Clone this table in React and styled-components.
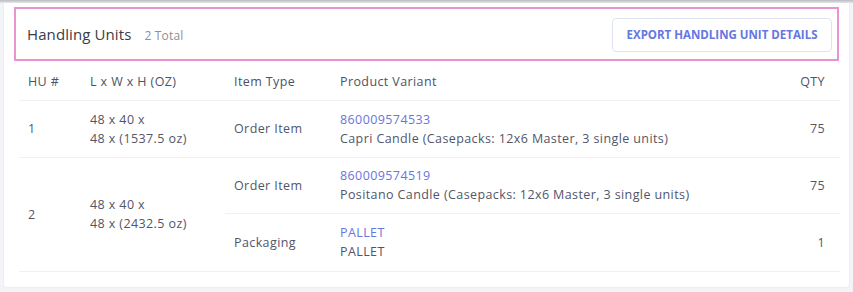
import React from "react";
import styled, { createGlobalStyle } from "styled-components";

const GlobalStyle = createGlobalStyle`
  html, body { margin: 0; padding: 0; }
  body {
    background: #f3f4f7;
    font-family: "Open Sans", "Liberation Sans", sans-serif;
    color: #525669;
  }
`;

const TopStrip = styled.div`
  height: 3px;
  background: linear-gradient(#b9bbc0, #e6e7ea);
`;

const Page = styled.div`
  padding: 0 3px 4px 3px;
`;

const Card = styled.section`
  background: #fff;
  border: 1px solid #eceef2;
  border-top: none;
  border-radius: 0 0 4px 4px;
  padding: 4px 9px 17px 9px;
  height: 285px;
  box-sizing: border-box;
`;

const Header = styled.header`
  display: flex;
  align-items: center;
  justify-content: space-between;
  height: 54px;
  box-sizing: border-box;
  border: 2px solid #eb92d3;
  padding: 0 5px 0 11px;
  margin: 0 1px 0 1px;
`;

const TitleGroup = styled.div`
  display: flex;
  align-items: baseline;
  gap: 13px;
`;

const Title = styled.h2`
  margin: 0;
  font-size: 15px;
  font-weight: 500;
  letter-spacing: 0.1px;
  color: #3a3c47;
`;

const Count = styled.span`
  font-size: 12px;
  letter-spacing: 0.2px;
  color: #8d8f99;
`;

const ExportButton = styled.button`
  height: 34px;
  width: 220px;
  margin-top: 1px;
  border: 1px solid #dfe3f1;
  border-radius: 4px;
  background: #fff;
  color: #6676e3;
  font-family: inherit;
  font-size: 11.5px;
  font-weight: 700;
  text-transform: uppercase;
  cursor: pointer;
`;

const Table = styled.table`
  width: calc(100% - 6px);
  margin-left: 6px;
  border-collapse: collapse;
  font-size: 12.5px;
  letter-spacing: 0.4px;
  line-height: 19px;
`;

const Th = styled.th`
  text-align: ${(p) => p.$align || "left"};
  font-weight: 400;
  color: #4e5265;
  height: 39px;
  padding: 2px ${(p) => (p.$align === "right" ? "15px" : "9px")} 0 9px;
  border-bottom: 1px solid #f0f1f4;
  width: ${(p) => p.$w || "auto"};
  box-sizing: border-box;
`;

const Td = styled.td`
  text-align: ${(p) => p.$align || "left"};
  vertical-align: middle;
  padding: 0 ${(p) => (p.$align === "right" ? "15px" : "9px")} 0 9px;
  height: ${(p) => p.$h || 55}px;
  border-bottom: 1px solid #f0f1f4;
  color: #525669;
`;

const Stack = styled.div`
  display: flex;
  flex-direction: column;
`;

const VariantLink = styled.a`
  color: #6a75da;
  text-decoration: none;
`;

const rows = [
  {
    hu: "1",
    dims: ["48 x 40 x", "48 x (1537.5 oz)"],
    items: [
      {
        type: "Order Item",
        code: "860009574533",
        name: "Capri Candle (Casepacks: 12x6 Master, 3 single units)",
        qty: 75,
        h: 56,
      },
    ],
  },
  {
    hu: "2",
    dims: ["48 x 40 x", "48 x (2432.5 oz)"],
    items: [
      {
        type: "Order Item",
        code: "860009574519",
        name: "Positano Candle (Casepacks: 12x6 Master, 3 single units)",
        qty: 75,
        h: 55,
      },
      { type: "Packaging", code: "PALLET", name: "PALLET", qty: 1, h: 57 },
    ],
  },
];

function ItemCells({ item }) {
  return (
    <>
      <Td $h={item.h}>{item.type}</Td>
      <Td $h={item.h}>
        <Stack>
          <VariantLink href="#">{item.code}</VariantLink>
          <span>{item.name}</span>
        </Stack>
      </Td>
      <Td $h={item.h} $align="right">
        {item.qty}
      </Td>
    </>
  );
}

export default function App() {
  return (
    <>
      <GlobalStyle />
      <TopStrip />
      <Page>
        <Card>
          <Header>
            <TitleGroup>
              <Title>Handling Units</Title>
              <Count>2 Total</Count>
            </TitleGroup>
            <ExportButton>Export Handling Unit Details</ExportButton>
          </Header>
          <Table>
            <thead>
              <tr>
                <Th $w="62px">HU #</Th>
                <Th $w="144px">L x W x H (OZ)</Th>
                <Th $w="106px">Item Type</Th>
                <Th>Product Variant</Th>
                <Th $align="right">QTY</Th>
              </tr>
            </thead>
            <tbody>
              {rows.map((r) =>
                r.items.map((item, i) => (
                  <tr key={r.hu + "-" + i}>
                    {i === 0 && (
                      <>
                        <Td rowSpan={r.items.length}>{r.hu}</Td>
                        <Td rowSpan={r.items.length}>
                          <Stack>
                            {r.dims.map((d) => (
                              <span key={d}>{d}</span>
                            ))}
                          </Stack>
                        </Td>
                      </>
                    )}
                    <ItemCells item={item} />
                  </tr>
                ))
              )}
            </tbody>
          </Table>
        </Card>
      </Page>
    </>
  );
}
